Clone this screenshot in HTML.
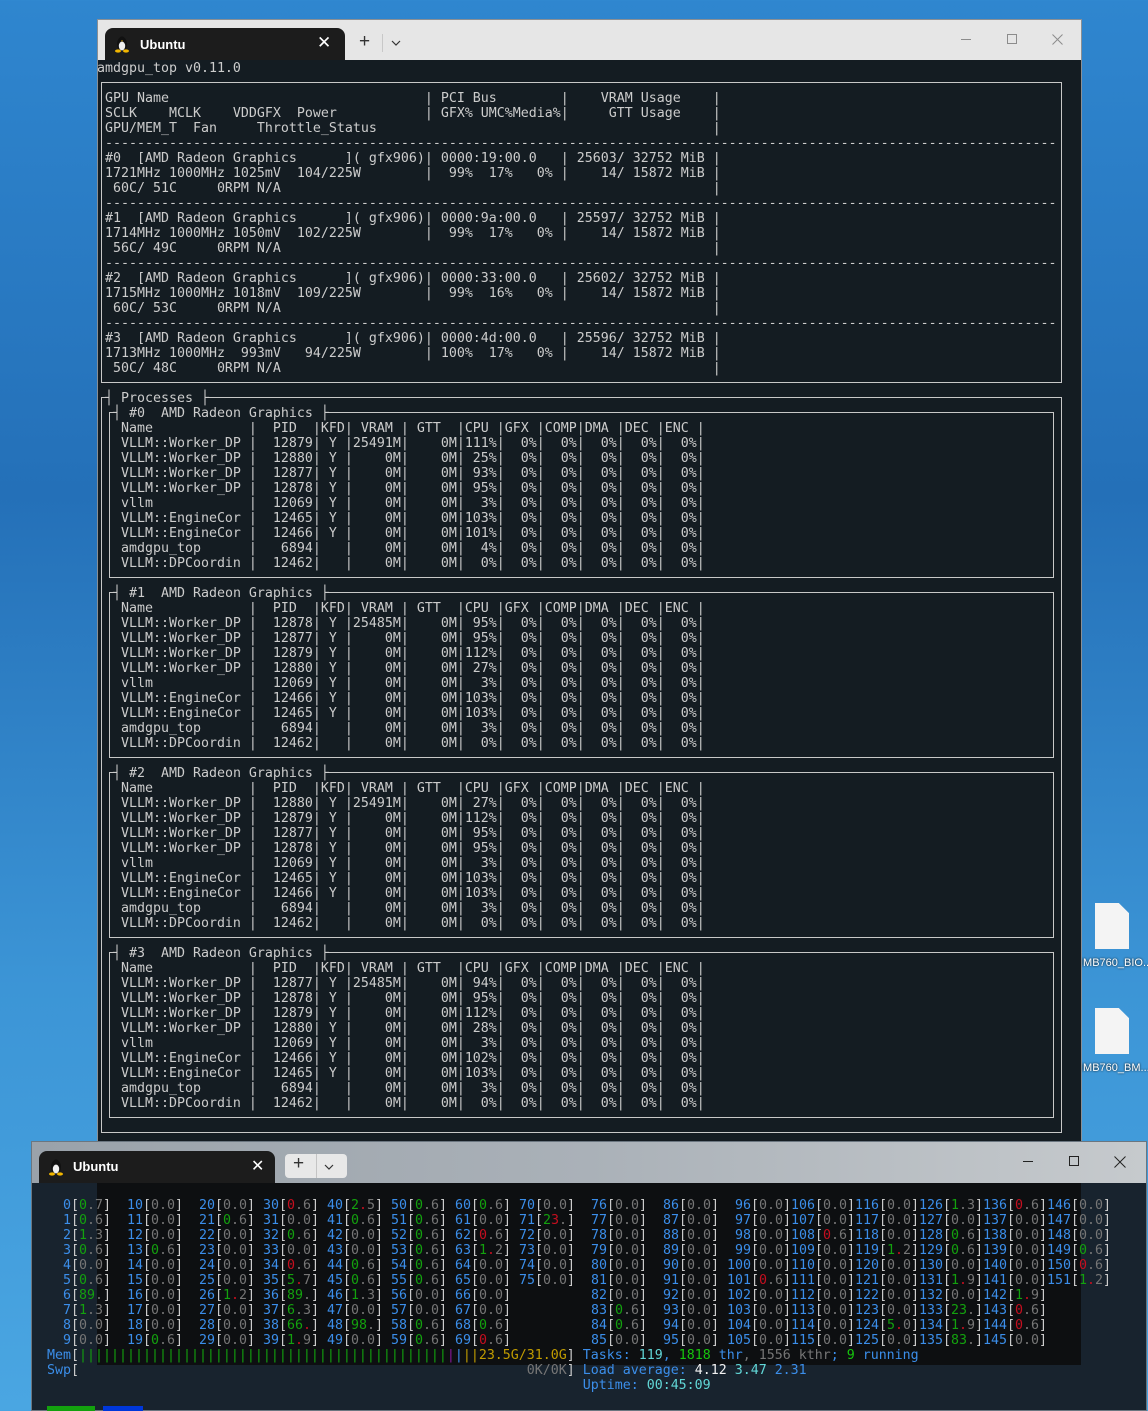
<!DOCTYPE html>
<html><head><meta charset="utf-8"><style>
*{margin:0;padding:0;box-sizing:border-box}
body{width:1148px;height:1411px;overflow:hidden;position:relative;background:linear-gradient(180deg,#2f86cf 0%,#2470b8 35%,#3c95d6 70%,#4aa6e2 100%);font-family:"DejaVu Sans Mono","Liberation Mono",monospace}
.abs{position:absolute}
pre{position:absolute;font-family:"DejaVu Sans Mono","Liberation Mono",monospace;font-size:13.29px;line-height:15px;color:#cccccc;white-space:pre}
.box{position:absolute;border:1px solid #c8c8c8}
.t{background:#141c22}
b{font-weight:normal;color:#3b8eea}
i{font-style:normal;color:#767676}
s{text-decoration:none;color:#13a10e}
u{text-decoration:none;color:#c50f1f}
.c{color:#61d6d6}
.y{color:#c19c00}
.p{color:#881798}
.lg{color:#16c60c}
.ui{font-family:"Liberation Sans","DejaVu Sans",sans-serif}
</style></head><body>

<div class="abs" style="left:1095px;top:903px;width:34px;height:46px;background:#f4f4f4;clip-path:polygon(0 0,70% 0,100% 22%,100% 100%,0 100%)"></div>
<div class="abs ui" style="left:1080px;top:957px;font-size:11px;color:#fff;text-shadow:0 0 2px #000">IMB760_BIO...</div>
<div class="abs" style="left:1095px;top:1008px;width:34px;height:46px;background:#f4f4f4;clip-path:polygon(0 0,70% 0,100% 22%,100% 100%,0 100%)"></div>
<div class="abs ui" style="left:1080px;top:1062px;font-size:11px;color:#fff;text-shadow:0 0 2px #000">IMB760_BM...</div>

<div class="abs" style="left:97px;top:19px;width:985px;height:1125px;background:#141c22;border:1px solid #8a8f94"></div>
<div class="abs" style="left:98px;top:20px;width:983px;height:40px;background:#e6e6e6"></div>
<div class="abs" style="left:105px;top:28px;width:240px;height:32px;background:#1c1c1c;border-radius:8px 8px 0 0"></div>
<svg class="abs" style="left:114px;top:35px" width="16" height="18" viewBox="0 0 16 18"><ellipse cx="8" cy="9" rx="5" ry="7" fill="#111"/><ellipse cx="8" cy="11" rx="3.2" ry="4.5" fill="#f0f0f0"/><circle cx="8" cy="4" r="2.6" fill="#111"/><ellipse cx="4" cy="16" rx="3" ry="1.6" fill="#f2b600"/><ellipse cx="12" cy="16" rx="3" ry="1.6" fill="#f2b600"/><path d="M7 5.5h2l-1 1.2z" fill="#f2b600"/></svg>
<div class="abs ui" style="left:140px;top:37px;font-size:13px;font-weight:bold;color:#fff">Ubuntu</div>
<div class="abs ui" style="left:317px;top:33px;font-size:17px;color:#fff">✕</div>
<div class="abs ui" style="left:359px;top:31px;font-size:19px;color:#333">+</div>
<div class="abs" style="left:382px;top:34px;width:1px;height:18px;background:#c8c8c8"></div>
<svg class="abs" style="left:391px;top:40px" width="10" height="6"><path d="M1 1l4 4 4-4" stroke="#333" fill="none" stroke-width="1.2"/></svg>
<div class="abs" style="left:961px;top:39px;width:10px;height:1px;background:#8c8c8c"></div>
<div class="abs" style="left:1007px;top:34px;width:10px;height:10px;border:1px solid #8c8c8c"></div>
<svg class="abs" style="left:1052px;top:34px" width="11" height="11"><path d="M0.5 0.5l10 10M10.5 0.5l-10 10" stroke="#8c8c8c"/></svg>

<div class="box" style="left:101px;top:82px;width:961px;height:301px"></div>
<div class="box" style="left:101px;top:397px;width:961px;height:736px"></div>
<div class="box" style="left:109px;top:412px;width:945px;height:166px"></div>
<div class="box" style="left:109px;top:592px;width:945px;height:166px"></div>
<div class="box" style="left:109px;top:772px;width:945px;height:166px"></div>
<div class="box" style="left:109px;top:952px;width:945px;height:166px"></div>

<pre style="left:97px;top:61px">amdgpu_top v0.11.0

 GPU Name                                | PCI Bus        |    VRAM Usage    |
 SCLK    MCLK    VDDGFX  Power           | GFX% UMC%Media%|     GTT Usage    |
 GPU/MEM_T  Fan     Throttle_Status                                          |
 -----------------------------------------------------------------------------------------------------------------------
 #0  [AMD Radeon Graphics      ]( gfx906)| 0000:19:00.0   | 25603/ 32752 MiB |
 1721MHz 1000MHz 1025mV  104/225W        |  99%  17%   0% |    14/ 15872 MiB |
  60C/ 51C     0RPM N/A                                                      |
 -----------------------------------------------------------------------------------------------------------------------
 #1  [AMD Radeon Graphics      ]( gfx906)| 0000:9a:00.0   | 25597/ 32752 MiB |
 1714MHz 1000MHz 1050mV  102/225W        |  99%  17%   0% |    14/ 15872 MiB |
  56C/ 49C     0RPM N/A                                                      |
 -----------------------------------------------------------------------------------------------------------------------
 #2  [AMD Radeon Graphics      ]( gfx906)| 0000:33:00.0   | 25602/ 32752 MiB |
 1715MHz 1000MHz 1018mV  109/225W        |  99%  16%   0% |    14/ 15872 MiB |
  60C/ 53C     0RPM N/A                                                      |
 -----------------------------------------------------------------------------------------------------------------------
 #3  [AMD Radeon Graphics      ]( gfx906)| 0000:4d:00.0   | 25596/ 32752 MiB |
 1713MHz 1000MHz  993mV   94/225W        | 100%  17%   0% |    14/ 15872 MiB |
  50C/ 48C     0RPM N/A                                                      |

 <span class="t">┤ Processes ├</span>
  <span class="t">┤ #0  AMD Radeon Graphics ├</span>
   Name            |  PID  |KFD| VRAM | GTT  |CPU |GFX |COMP|DMA |DEC |ENC |
   VLLM::Worker_DP |  12879| Y |25491M|    0M|111%|  0%|  0%|  0%|  0%|  0%|
   VLLM::Worker_DP |  12880| Y |    0M|    0M| 25%|  0%|  0%|  0%|  0%|  0%|
   VLLM::Worker_DP |  12877| Y |    0M|    0M| 93%|  0%|  0%|  0%|  0%|  0%|
   VLLM::Worker_DP |  12878| Y |    0M|    0M| 95%|  0%|  0%|  0%|  0%|  0%|
   vllm            |  12069| Y |    0M|    0M|  3%|  0%|  0%|  0%|  0%|  0%|
   VLLM::EngineCor |  12465| Y |    0M|    0M|103%|  0%|  0%|  0%|  0%|  0%|
   VLLM::EngineCor |  12466| Y |    0M|    0M|101%|  0%|  0%|  0%|  0%|  0%|
   amdgpu_top      |   6894|   |    0M|    0M|  4%|  0%|  0%|  0%|  0%|  0%|
   VLLM::DPCoordin |  12462|   |    0M|    0M|  0%|  0%|  0%|  0%|  0%|  0%|

  <span class="t">┤ #1  AMD Radeon Graphics ├</span>
   Name            |  PID  |KFD| VRAM | GTT  |CPU |GFX |COMP|DMA |DEC |ENC |
   VLLM::Worker_DP |  12878| Y |25485M|    0M| 95%|  0%|  0%|  0%|  0%|  0%|
   VLLM::Worker_DP |  12877| Y |    0M|    0M| 95%|  0%|  0%|  0%|  0%|  0%|
   VLLM::Worker_DP |  12879| Y |    0M|    0M|112%|  0%|  0%|  0%|  0%|  0%|
   VLLM::Worker_DP |  12880| Y |    0M|    0M| 27%|  0%|  0%|  0%|  0%|  0%|
   vllm            |  12069| Y |    0M|    0M|  3%|  0%|  0%|  0%|  0%|  0%|
   VLLM::EngineCor |  12466| Y |    0M|    0M|103%|  0%|  0%|  0%|  0%|  0%|
   VLLM::EngineCor |  12465| Y |    0M|    0M|103%|  0%|  0%|  0%|  0%|  0%|
   amdgpu_top      |   6894|   |    0M|    0M|  3%|  0%|  0%|  0%|  0%|  0%|
   VLLM::DPCoordin |  12462|   |    0M|    0M|  0%|  0%|  0%|  0%|  0%|  0%|

  <span class="t">┤ #2  AMD Radeon Graphics ├</span>
   Name            |  PID  |KFD| VRAM | GTT  |CPU |GFX |COMP|DMA |DEC |ENC |
   VLLM::Worker_DP |  12880| Y |25491M|    0M| 27%|  0%|  0%|  0%|  0%|  0%|
   VLLM::Worker_DP |  12879| Y |    0M|    0M|112%|  0%|  0%|  0%|  0%|  0%|
   VLLM::Worker_DP |  12877| Y |    0M|    0M| 95%|  0%|  0%|  0%|  0%|  0%|
   VLLM::Worker_DP |  12878| Y |    0M|    0M| 95%|  0%|  0%|  0%|  0%|  0%|
   vllm            |  12069| Y |    0M|    0M|  3%|  0%|  0%|  0%|  0%|  0%|
   VLLM::EngineCor |  12465| Y |    0M|    0M|103%|  0%|  0%|  0%|  0%|  0%|
   VLLM::EngineCor |  12466| Y |    0M|    0M|103%|  0%|  0%|  0%|  0%|  0%|
   amdgpu_top      |   6894|   |    0M|    0M|  3%|  0%|  0%|  0%|  0%|  0%|
   VLLM::DPCoordin |  12462|   |    0M|    0M|  0%|  0%|  0%|  0%|  0%|  0%|

  <span class="t">┤ #3  AMD Radeon Graphics ├</span>
   Name            |  PID  |KFD| VRAM | GTT  |CPU |GFX |COMP|DMA |DEC |ENC |
   VLLM::Worker_DP |  12877| Y |25485M|    0M| 94%|  0%|  0%|  0%|  0%|  0%|
   VLLM::Worker_DP |  12878| Y |    0M|    0M| 95%|  0%|  0%|  0%|  0%|  0%|
   VLLM::Worker_DP |  12879| Y |    0M|    0M|112%|  0%|  0%|  0%|  0%|  0%|
   VLLM::Worker_DP |  12880| Y |    0M|    0M| 28%|  0%|  0%|  0%|  0%|  0%|
   vllm            |  12069| Y |    0M|    0M|  3%|  0%|  0%|  0%|  0%|  0%|
   VLLM::EngineCor |  12466| Y |    0M|    0M|102%|  0%|  0%|  0%|  0%|  0%|
   VLLM::EngineCor |  12465| Y |    0M|    0M|103%|  0%|  0%|  0%|  0%|  0%|
   amdgpu_top      |   6894|   |    0M|    0M|  3%|  0%|  0%|  0%|  0%|  0%|
   VLLM::DPCoordin |  12462|   |    0M|    0M|  0%|  0%|  0%|  0%|  0%|  0%|</pre>

<div class="abs" style="left:31px;top:1141px;width:1116px;height:270px;background:#18232e;border:1px solid #6b7680"></div>
<div class="abs" style="left:32px;top:1142px;width:1114px;height:41px;background:linear-gradient(90deg,#9aa2aa,#aab1b8 50%,#c6cacd)"></div>
<div class="abs" style="left:97px;top:1183px;width:984px;height:182px;background:#0d0f11"></div>
<div class="abs" style="left:39px;top:1151px;width:236px;height:32px;background:#1c1c1c;border-radius:8px 8px 0 0"></div>
<svg class="abs" style="left:48px;top:1158px" width="16" height="18" viewBox="0 0 16 18"><ellipse cx="8" cy="9" rx="5" ry="7" fill="#111"/><ellipse cx="8" cy="11" rx="3.2" ry="4.5" fill="#f0f0f0"/><circle cx="8" cy="4" r="2.6" fill="#111"/><ellipse cx="4" cy="16" rx="3" ry="1.6" fill="#f2b600"/><ellipse cx="12" cy="16" rx="3" ry="1.6" fill="#f2b600"/></svg>
<div class="abs ui" style="left:73px;top:1159px;font-size:13px;font-weight:bold;color:#fff">Ubuntu</div>
<div class="abs ui" style="left:251px;top:1156px;font-size:16px;color:#fff">✕</div>
<div class="abs" style="left:285px;top:1154px;width:62px;height:24px;background:#e8e8e8;border-radius:4px"></div>
<div class="abs ui" style="left:293px;top:1153px;font-size:19px;color:#333">+</div>
<div class="abs" style="left:316px;top:1154px;width:1px;height:24px;background:#c4c4c4"></div>
<svg class="abs" style="left:324px;top:1164px" width="10" height="6"><path d="M1 1l4 4 4-4" stroke="#333" fill="none" stroke-width="1.2"/></svg>
<div class="abs" style="left:1023px;top:1161px;width:10px;height:1px;background:#222"></div>
<div class="abs" style="left:1069px;top:1156px;width:10px;height:10px;border:1px solid #222"></div>
<svg class="abs" style="left:1114px;top:1156px" width="12" height="12"><path d="M0.5 0.5l11 11M11.5 0.5l-11 11" stroke="#222"/></svg>
<div class="abs" style="left:47px;top:1406px;width:48px;height:5px;background:#13a10e"></div>
<div class="abs" style="left:103px;top:1406px;width:40px;height:5px;background:#0037da"></div>

<pre style="left:47px;top:1198px">  <b>0</b>[<s>0</s><i>.7</i>]  <b>10</b>[<i>0.0</i>]  <b>20</b>[<i>0.0</i>] <b>30</b>[<u>0</u><i>.6</i>] <b>40</b>[<s>2</s><u>.</u><i>5</i>] <b>50</b>[<s>0</s><i>.6</i>] <b>60</b>[<s>0</s><i>.6</i>] <b>70</b>[<i>0.0</i>]  <b>76</b>[<i>0.0</i>]  <b>86</b>[<i>0.0</i>]  <b>96</b>[<i>0.0</i>]<b>106</b>[<i>0.0</i>]<b>116</b>[<i>0.0</i>]<b>126</b>[<s>1</s><i>.3</i>]<b>136</b>[<u>0</u><i>.6</i>]<b>146</b>[<i>0.0</i>]
  <b>1</b>[<s>0</s><i>.6</i>]  <b>11</b>[<i>0.0</i>]  <b>21</b>[<s>0</s><i>.6</i>] <b>31</b>[<i>0.0</i>] <b>41</b>[<s>0</s><i>.6</i>] <b>51</b>[<s>0</s><i>.6</i>] <b>61</b>[<i>0.0</i>] <b>71</b>[<s>2</s><u>3</u><i>.</i>]  <b>77</b>[<i>0.0</i>]  <b>87</b>[<i>0.0</i>]  <b>97</b>[<i>0.0</i>]<b>107</b>[<i>0.0</i>]<b>117</b>[<i>0.0</i>]<b>127</b>[<i>0.0</i>]<b>137</b>[<i>0.0</i>]<b>147</b>[<i>0.0</i>]
  <b>2</b>[<s>1</s><i>.3</i>]  <b>12</b>[<i>0.0</i>]  <b>22</b>[<i>0.0</i>] <b>32</b>[<s>0</s><i>.6</i>] <b>42</b>[<i>0.0</i>] <b>52</b>[<s>0</s><i>.6</i>] <b>62</b>[<u>0</u><i>.6</i>] <b>72</b>[<i>0.0</i>]  <b>78</b>[<i>0.0</i>]  <b>88</b>[<i>0.0</i>]  <b>98</b>[<i>0.0</i>]<b>108</b>[<u>0</u><i>.6</i>]<b>118</b>[<i>0.0</i>]<b>128</b>[<s>0</s><i>.6</i>]<b>138</b>[<i>0.0</i>]<b>148</b>[<i>0.0</i>]
  <b>3</b>[<s>0</s><i>.6</i>]  <b>13</b>[<s>0</s><i>.6</i>]  <b>23</b>[<i>0.0</i>] <b>33</b>[<i>0.0</i>] <b>43</b>[<i>0.0</i>] <b>53</b>[<s>0</s><i>.6</i>] <b>63</b>[<s>1</s><u>.</u><i>2</i>] <b>73</b>[<i>0.0</i>]  <b>79</b>[<i>0.0</i>]  <b>89</b>[<i>0.0</i>]  <b>99</b>[<i>0.0</i>]<b>109</b>[<i>0.0</i>]<b>119</b>[<s>1</s><u>.</u><i>2</i>]<b>129</b>[<s>0</s><i>.6</i>]<b>139</b>[<i>0.0</i>]<b>149</b>[<s>0</s><i>.6</i>]
  <b>4</b>[<i>0.0</i>]  <b>14</b>[<i>0.0</i>]  <b>24</b>[<i>0.0</i>] <b>34</b>[<u>0</u><i>.6</i>] <b>44</b>[<s>0</s><i>.6</i>] <b>54</b>[<s>0</s><i>.6</i>] <b>64</b>[<i>0.0</i>] <b>74</b>[<i>0.0</i>]  <b>80</b>[<i>0.0</i>]  <b>90</b>[<i>0.0</i>] <b>100</b>[<i>0.0</i>]<b>110</b>[<i>0.0</i>]<b>120</b>[<i>0.0</i>]<b>130</b>[<i>0.0</i>]<b>140</b>[<i>0.0</i>]<b>150</b>[<u>0</u><i>.6</i>]
  <b>5</b>[<s>0</s><i>.6</i>]  <b>15</b>[<i>0.0</i>]  <b>25</b>[<i>0.0</i>] <b>35</b>[<s>5</s><u>.</u><i>7</i>] <b>45</b>[<s>0</s><i>.6</i>] <b>55</b>[<s>0</s><i>.6</i>] <b>65</b>[<i>0.0</i>] <b>75</b>[<i>0.0</i>]  <b>81</b>[<i>0.0</i>]  <b>91</b>[<i>0.0</i>] <b>101</b>[<u>0</u><i>.6</i>]<b>111</b>[<i>0.0</i>]<b>121</b>[<i>0.0</i>]<b>131</b>[<s>1</s><u>.</u><i>9</i>]<b>141</b>[<i>0.0</i>]<b>151</b>[<s>1</s><u>.</u><i>2</i>]
  <b>6</b>[<s>89</s><i>.</i>]  <b>16</b>[<i>0.0</i>]  <b>26</b>[<s>1</s><u>.</u><i>2</i>] <b>36</b>[<s>89</s><i>.</i>] <b>46</b>[<s>1</s><i>.3</i>] <b>56</b>[<i>0.0</i>] <b>66</b>[<i>0.0</i>]          <b>82</b>[<i>0.0</i>]  <b>92</b>[<i>0.0</i>] <b>102</b>[<i>0.0</i>]<b>112</b>[<i>0.0</i>]<b>122</b>[<i>0.0</i>]<b>132</b>[<i>0.0</i>]<b>142</b>[<s>1</s><u>.</u><i>9</i>]
  <b>7</b>[<s>1</s><i>.3</i>]  <b>17</b>[<i>0.0</i>]  <b>27</b>[<i>0.0</i>] <b>37</b>[<s>6</s><i>.3</i>] <b>47</b>[<i>0.0</i>] <b>57</b>[<i>0.0</i>] <b>67</b>[<i>0.0</i>]          <b>83</b>[<s>0</s><i>.6</i>]  <b>93</b>[<i>0.0</i>] <b>103</b>[<i>0.0</i>]<b>113</b>[<i>0.0</i>]<b>123</b>[<i>0.0</i>]<b>133</b>[<s>23</s><i>.</i>]<b>143</b>[<u>0</u><i>.6</i>]
  <b>8</b>[<i>0.0</i>]  <b>18</b>[<i>0.0</i>]  <b>28</b>[<i>0.0</i>] <b>38</b>[<s>66</s><u>.</u>] <b>48</b>[<s>98</s><i>.</i>] <b>58</b>[<s>0</s><i>.6</i>] <b>68</b>[<s>0</s><i>.6</i>]          <b>84</b>[<s>0</s><i>.6</i>]  <b>94</b>[<i>0.0</i>] <b>104</b>[<i>0.0</i>]<b>114</b>[<i>0.0</i>]<b>124</b>[<s>5</s><u>.</u><i>0</i>]<b>134</b>[<s>1</s><u>.</u><i>9</i>]<b>144</b>[<u>0</u><i>.6</i>]
  <b>9</b>[<i>0.0</i>]  <b>19</b>[<s>0</s><i>.6</i>]  <b>29</b>[<i>0.0</i>] <b>39</b>[<s>1</s><u>.</u><i>9</i>] <b>49</b>[<i>0.0</i>] <b>59</b>[<s>0</s><i>.6</i>] <b>69</b>[<u>0</u><i>.6</i>]          <b>85</b>[<i>0.0</i>]  <b>95</b>[<i>0.0</i>] <b>105</b>[<i>0.0</i>]<b>115</b>[<i>0.0</i>]<b>125</b>[<i>0.0</i>]<b>135</b>[<s>83</s><i>.</i>]<b>145</b>[<i>0.0</i>]
<b>Mem</b>[<s>||||||||||||||||||||||||||||||||||||||||||||||</s><span class="p">|</span><b>|</b><span class="y">||23.5G/31.0G</span>] <b>Tasks: </b><span class="c">119</span><b>, </b><span class="lg">1818</span><b> thr</b><i>, 1556 kthr</i><b>; </b><span class="lg">9</span><b> running</b>
<b>Swp</b>[                                                        <i>0K/0K</i>] <b>Load average: </b><span style="color:#f2f2f2">4.12</span> <span class="c">3.47</span> <b>2.31</b>
                                                                   <b>Uptime: </b><span class="c">00:45:09</span></pre>
</body></html>
